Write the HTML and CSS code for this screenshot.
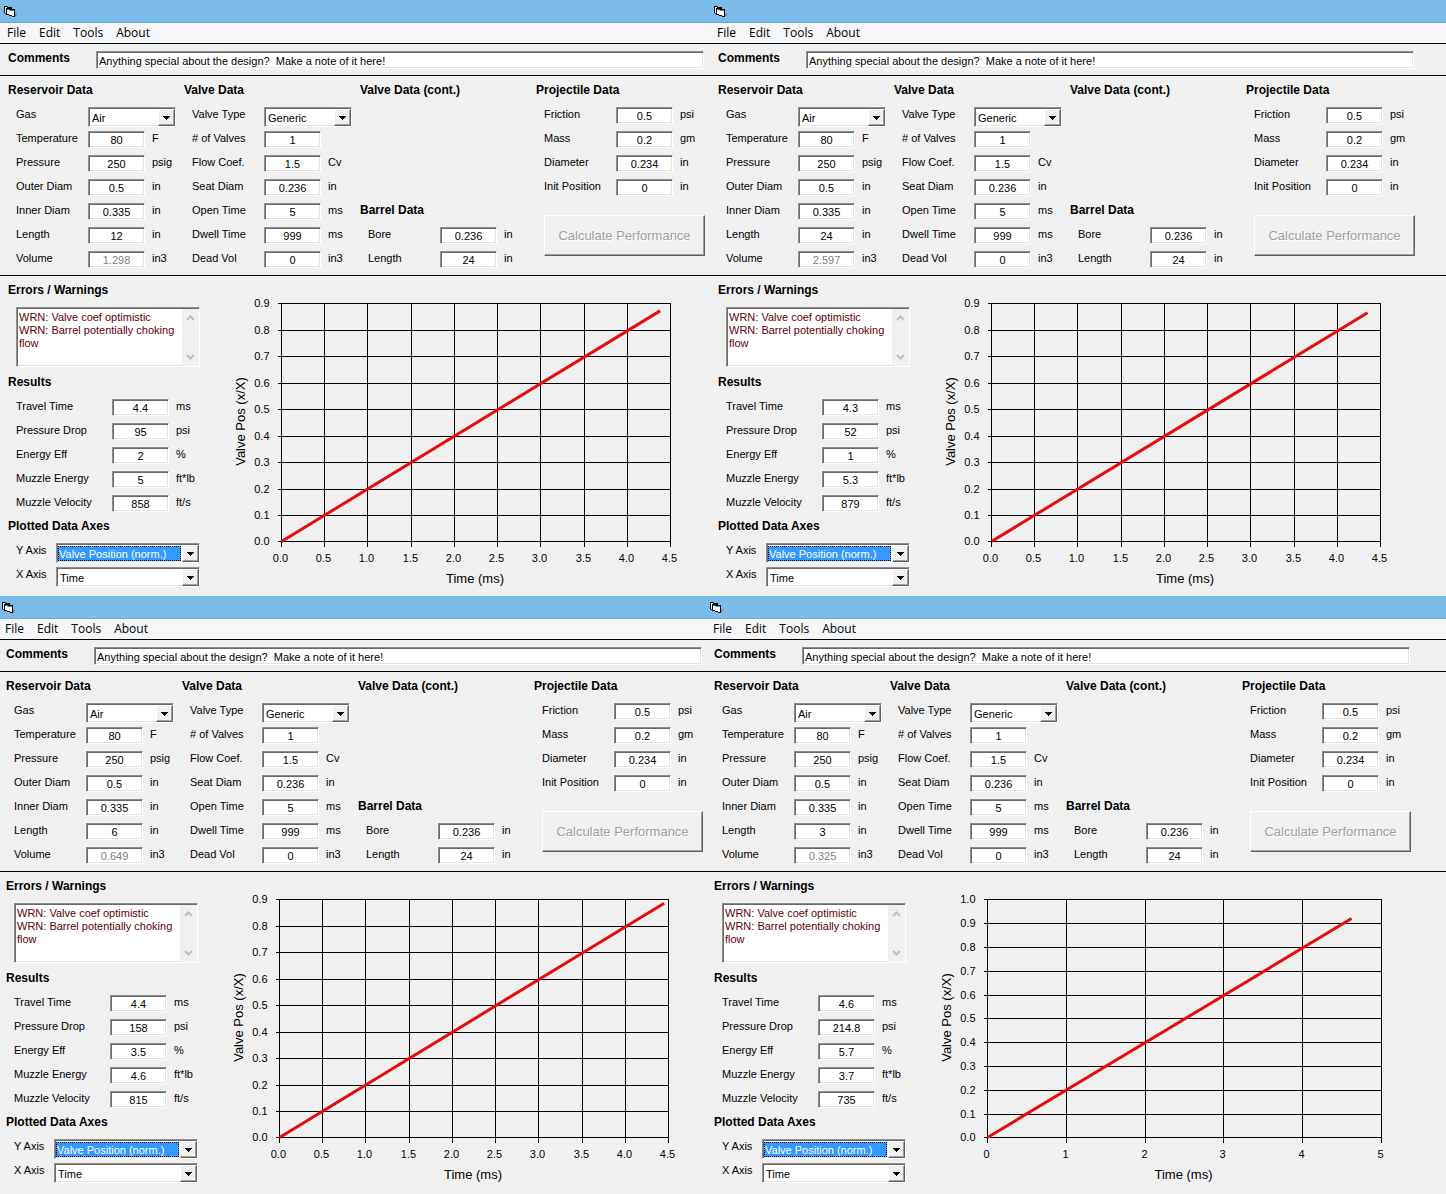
FILE: index.html
```html
<!DOCTYPE html>
<html lang="en">
<head>
<meta charset="utf-8">
<meta name="viewport" content="width=device-width, initial-scale=1">
<title>Pneumatic Performance</title>
<link rel="stylesheet" href="styles.css">
</head>
<body>
<main class="desk">
  <div class="desk-row" id="row-top"></div>
  <div class="desk-row desk-row-tight" id="row-bottom"></div>
</main>
<script src="app.js"></script>
</body>
</html>
```
FILE: app.js
```js
// One entry per simulator window: inputs that differ, results and plot range.
const runs = [
  { row: "row-top", length: "12", volume: "1.298", results: ["4.4", "95", "2", "5", "858"],
    xStep: 0.5, xMax: 4.5, yMax: 0.9, plotWidth: 389, end: [4.38, 0.872] },
  { row: "row-top", length: "24", volume: "2.597", results: ["4.3", "52", "1", "5.3", "879"],
    xStep: 0.5, xMax: 4.5, yMax: 0.9, plotWidth: 389, end: [4.35, 0.865] },
  { row: "row-bottom", length: "6", volume: "0.649", results: ["4.4", "158", "3.5", "4.6", "815"],
    xStep: 0.5, xMax: 4.5, yMax: 0.9, plotWidth: 389, end: [4.45, 0.886] },
  { row: "row-bottom", length: "3", volume: "0.325", results: ["4.6", "214.8", "5.7", "3.7", "735"],
    xStep: 1, xMax: 5, yMax: 1, plotWidth: 394, end: [4.62, 0.92] }
];

let nextId = 0;

function field(label, value, unit = "", disabled = false) {
  const id = "f" + nextId++;
  return `<div class="field"><label for="${id}">${label}</label>` +
    `<input class="sunken value" id="${id}" type="text" value="${value}"${disabled ? " disabled" : ""}>` +
    `<span class="unit">${unit}</span></div>`;
}

function combo(label, value, extra = "") {
  const id = "f" + nextId++;
  return `<div class="field field-combo ${extra}"><label for="${id}">${label}</label>` +
    `<span class="sunken combo"><select id="${id}"><option>${value}</option></select>` +
    `<span class="combo-arrow"><svg width="7" height="4" viewBox="0 0 7 4" aria-hidden="true">` +
    `<path d="M0 0h7v1H6v1H5v1H4v1H3V3H2V2H1V1H0z"/></svg></span></span></div>`;
}

function chart(run) {
  const left = 57.5, top = 27.5, height = 238, bottom = top + height;
  const right = left + run.plotWidth;
  const px = v => left + Math.round(v / run.xMax * run.plotWidth);
  const py = v => bottom - Math.floor(v / run.yMax * height + 0.01);
  let lines = "", texts = "";
  for (let i = 0; i <= Math.round(run.yMax * 10); i++) {
    const y = py(i / 10);
    lines += `M${left - 4} ${y}H${right + 0.5}`;
    texts += `<text class="tick" x="${left - 12}" y="${y + 3.5}" text-anchor="end">${(i / 10).toFixed(1)}</text>`;
  }
  for (let v = 0; v <= run.xMax; v += run.xStep) {
    lines += `M${px(v)} ${top}V${bottom + 5}`;
    texts += `<text class="tick" x="${px(v) - 1}" y="${bottom + 20.5}" text-anchor="middle">${run.xStep < 1 ? v.toFixed(1) : v}</text>`;
  }
  const endX = left + run.end[0] / run.xMax * run.plotWidth;
  const endY = bottom - run.end[1] / run.yMax * height;
  const midY = top + height / 2;
  return `<svg class="chart" width="472" height="320" viewBox="0 0 472 320" role="img" aria-label="Valve position against time">
    <path class="grid" d="${lines}"/>
    <path class="trace" d="M${left} ${bottom}L${endX} ${endY}"/>
    ${texts}
    <text class="axis" x="${left + run.plotWidth / 2 - 1}" y="307" text-anchor="middle">Time (ms)</text>
    <text class="axis" transform="translate(21 ${midY - 1}) rotate(-90)" text-anchor="middle">Valve Pos (x/X)</text>
  </svg>`;
}

function windowMarkup(run) {
  const [time, drop, eff, energy, velocity] = run.results;
  const commentId = "f" + nextId++;
  const warnId = "f" + nextId++;
  return `<section class="window">
  <header class="titlebar">
    <svg width="14" height="12" viewBox="0 0 14 12" aria-hidden="true">
      <path d="M10 6l3 2v1l-3 2z" fill="#808080"/>
      <path d="M0 0h3l1 1h4v6l-6 1-2-1z"/>
      <path d="M1 1h2v6H1z" fill="#fff"/>
      <path d="M2 2h3l1 1h5v8H8V10H5V9H2z"/>
      <path d="M3 4h3l1 1h3v5H8V9H5V8H3z" fill="#fff"/>
      <path d="M3 3h2l1 1h4v1H6L5 4H3z" fill="#20a0a0"/>
    </svg>
  </header>
  <nav class="menubar">
    <button type="button">File</button><button type="button">Edit</button><button type="button">Tools</button><button type="button">About</button>
  </nav>
  <div class="comments">
    <label class="heading" for="${commentId}">Comments</label>
    <input class="sunken note" id="${commentId}" type="text" value="Anything special about the design?&nbsp; Make a note of it here!">
  </div>
  <div class="inputs">
    <div class="group">
      <h2 class="heading">Reservoir Data</h2>
      ${combo("Gas", "Air")}
      ${field("Temperature", "80", "F")}
      ${field("Pressure", "250", "psig")}
      ${field("Outer Diam", "0.5", "in")}
      ${field("Inner Diam", "0.335", "in")}
      ${field("Length", run.length, "in")}
      ${field("Volume", run.volume, "in3", true)}
    </div>
    <div class="group">
      <h2 class="heading">Valve Data</h2>
      ${combo("Valve Type", "Generic")}
      ${field("# of Valves", "1")}
      ${field("Flow Coef.", "1.5", "Cv")}
      ${field("Seat Diam", "0.236", "in")}
      ${field("Open Time", "5", "ms")}
      ${field("Dwell Time", "999", "ms")}
      ${field("Dead Vol", "0", "in3")}
    </div>
    <div class="group group-split">
      <h2 class="heading">Valve Data (cont.)</h2>
      <div>
        <h2 class="heading">Barrel Data</h2>
        ${field("Bore", "0.236", "in")}
        ${field("Length", "24", "in")}
      </div>
    </div>
    <div class="group">
      <h2 class="heading">Projectile Data</h2>
      ${field("Friction", "0.5", "psi")}
      ${field("Mass", "0.2", "gm")}
      ${field("Diameter", "0.234", "in")}
      ${field("Init Position", "0", "in")}
      <button class="calculate" type="button" disabled>Calculate Performance</button>
    </div>
  </div>
  <div class="output">
    <div class="group results">
      <label class="heading" for="${warnId}">Errors / Warnings</label>
      <div class="sunken warnings">
        <textarea id="${warnId}" readonly>WRN: Valve coef optimistic
WRN: Barrel potentially choking flow</textarea>
        <span class="scrollbar" aria-hidden="true">
          <svg width="9" height="6" viewBox="0 0 9 6"><path d="M1 5l3.500-3.500L8 5"/></svg>
          <svg width="9" height="6" viewBox="0 0 9 6"><path d="M1 1l3.500 3.500L8 1"/></svg>
        </span>
      </div>
      <h2 class="heading">Results</h2>
      ${field("Travel Time", time, "ms")}
      ${field("Pressure Drop", drop, "psi")}
      ${field("Energy Eff", eff, "%")}
      ${field("Muzzle Energy", energy, "ft*lb")}
      ${field("Muzzle Velocity", velocity, "ft/s")}
      <h2 class="heading">Plotted Data Axes</h2>
      ${combo("Y Axis", "Valve Position (norm.)", "field-axis is-focused")}
      ${combo("X Axis", "Time", "field-axis")}
    </div>
    ${chart(run)}
  </div>
</section>`;
}

for (const run of runs) {
  document.getElementById(run.row).insertAdjacentHTML("beforeend", windowMarkup(run));
}
```
FILE: styles.css
```css
* {
  box-sizing: border-box;
}

body {
  margin: 0;
  background: #f0f0f0;
  color: #000;
  font: 11px/14px "Liberation Sans", Arial, sans-serif;
}

input,
select,
textarea,
button {
  margin: 0;
  color: inherit;
  font: inherit;
}

.desk-row {
  --inset: 8px;
  display: grid;
  grid-template-columns: 710fr 736fr;
}

.desk-row-tight {
  --inset: 6px;
  grid-template-columns: 708fr 738fr;
}

.window {
  min-width: 0;
  background: #f0f0f0;
}

.titlebar {
  height: 23px;
  padding: 6px 0 0 calc(var(--inset) - 4px);
  background: #7abbe9;
  border-bottom: 1px solid #6fa9d2;
}

.titlebar svg {
  display: block;
}

.menubar {
  display: flex;
  gap: 13px;
  height: 20px;
  padding-left: calc(var(--inset) - 1px);
  background: #f5f6f7;
}

.menubar button {
  padding: 0;
  border: 0;
  background: none;
  font: 12px/20px "Open Sans", "Noto Sans", sans-serif;
}

.comments,
.inputs,
.output {
  padding-left: var(--inset);
  border-top: 1px solid #000;
}

.comments {
  display: grid;
  grid-template-columns: 88px minmax(0, 608px);
  padding-top: 7px;
  padding-bottom: 6px;
}

.heading {
  display: block;
  height: 24px;
  margin: 0;
  font-size: 12px;
  font-weight: bold;
  line-height: 14px;
  white-space: nowrap;
}

.comments .heading {
  height: 18px;
}

.sunken {
  border: 2px solid;
  border-color: #909090 #fff #fff #909090;
  border-radius: 0;
  background: #fff;
  box-shadow: inset 1px 1px #696969, inset -1px -1px #e3e3e3;
}

.note {
  width: 100%;
  height: 18px;
  padding: 2px 2px 0;
  border-width: 1px;
}

.inputs {
  display: grid;
  grid-template-columns: repeat(4, 176px);
  padding-top: 7px;
}

.group-split {
  display: flex;
  flex-direction: column;
  justify-content: space-between;
}

.field {
  display: grid;
  grid-template-columns: 72px 57px 1fr;
  height: 24px;
  padding-left: 8px;
  align-items: start;
  white-space: nowrap;
}

.unit {
  padding-left: 7px;
}

.value {
  width: 100%;
  height: 17px;
  padding: 1px 0 0;
  border-width: 1px;
  text-align: center;
}

.value:disabled {
  color: #808080;
}

.field-combo {
  grid-template-columns: 72px 88px;
}

.combo {
  display: flex;
  height: 20px;
  padding: 1px 0 0 1px;
  border-width: 1px;
}

.combo select {
  flex: 1;
  min-width: 0;
  padding: 0 0 0 2px;
  border: 0;
  background: none;
  appearance: none;
  outline: none;
}

.combo-arrow {
  display: flex;
  width: 17px;
  align-items: center;
  justify-content: center;
  border: 1px solid;
  border-color: #fff #606060 #606060 #fff;
  background: #f0f0f0;
  box-shadow: inset -1px -1px #a0a0a0;
}

.calculate {
  display: block;
  width: 161px;
  height: 41px;
  margin: 12px 0 0 8px;
  padding: 0;
  border: 1px solid;
  border-color: #fff #606060 #606060 #fff;
  background: #f0f0f0;
  box-shadow: inset -1px -1px #a0a0a0;
  color: #a0a0a0;
  font-size: 13px;
  text-shadow: 1px 1px #fff;
}

.output {
  display: grid;
  grid-template-columns: 216px minmax(0, 472px);
}

.results {
  padding: 7px 0 5px;
}

.results .field {
  grid-template-columns: 96px 57px 1fr;
}

.results .field-axis {
  grid-template-columns: 40px 144px;
}

.is-focused select {
  margin: 1px 1px 1px 0;
  padding-left: 1px;
  background: #3399ff;
  color: #fff;
  outline: 1px dotted #000;
  outline-offset: -1px;
}

.warnings {
  display: flex;
  width: 184px;
  height: 60px;
  margin: 0 0 8px 8px;
  border-width: 1px;
}

.warnings textarea {
  flex: 1;
  min-width: 0;
  padding: 3px 0 0 2px;
  border: 0;
  overflow: hidden;
  background: none;
  color: #600008;
  line-height: 13px;
  resize: none;
  outline: none;
}

.scrollbar {
  display: flex;
  flex-direction: column;
  justify-content: space-between;
  align-items: center;
  width: 17px;
  margin-top: 1px;
  padding: 6px 0;
  background: #f0f0f0;
}

.scrollbar path {
  fill: none;
  stroke: #bfbfbf;
  stroke-width: 2;
}

.chart {
  display: block;
}

.grid {
  fill: none;
  stroke: #000;
  shape-rendering: crispEdges;
}

.trace {
  fill: none;
  stroke: #e60c0c;
  stroke-width: 3;
}

.tick {
  font-size: 11px;
}

.axis {
  font-size: 13px;
}
```
